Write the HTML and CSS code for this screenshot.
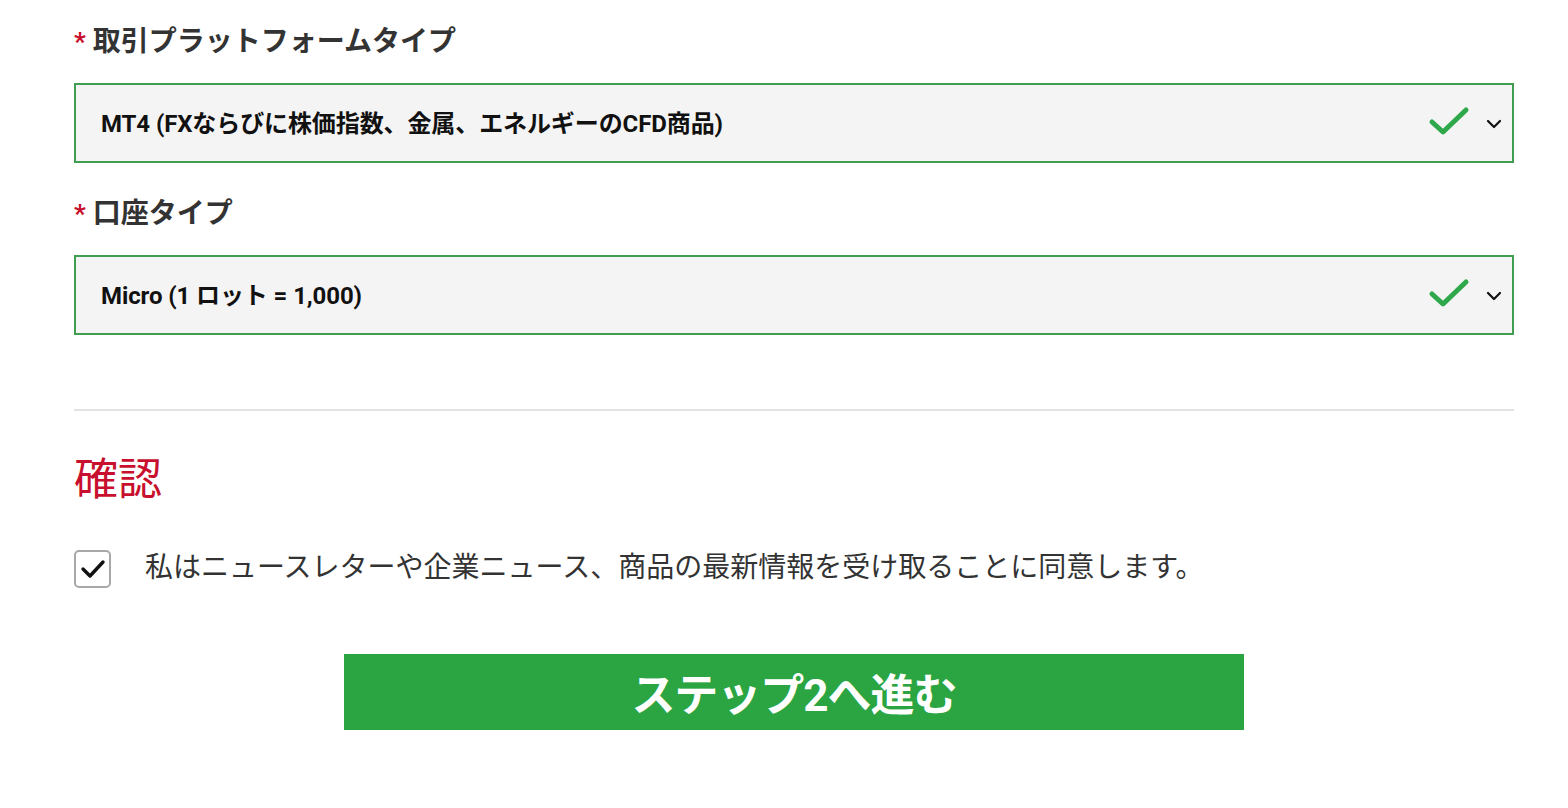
FILE: index.html
```html
<!DOCTYPE html>
<html lang="ja">
<head>
  <meta charset="UTF-8">
  <meta name="viewport" content="width=device-width, initial-scale=1.0">
  <title>口座開設 ステップ1</title>
  <link rel="stylesheet" href="styles.css">
</head>
<body>

  <div class="container">

    <!-- Platform -->
    <div class="field">
      <label class="field-label"><span class="req">*</span>取引プラットフォームタイプ</label>
      <div class="select-box">
        <span class="select-value">MT4 (FXならびに株価指数、金属、エネルギーのCFD商品)</span>
        <svg class="valid-icon" width="42" height="30" viewBox="0 0 42 30"><path d="M4 16 L15 26 L38 4" fill="none" stroke="#2ea84a" stroke-width="5" stroke-linecap="round" stroke-linejoin="round"/></svg>
        <svg class="chevron" width="16" height="10" viewBox="0 0 16 10"><path d="M2 2 L8 8 L14 2" fill="none" stroke="#111" stroke-width="2.2" stroke-linecap="round" stroke-linejoin="round"/></svg>
      </div>
    </div>

    <!-- Account type -->
    <div class="field">
      <label class="field-label"><span class="req">*</span>口座タイプ</label>
      <div class="select-box">
        <span class="select-value">Micro (1 ロット = 1,000)</span>
        <svg class="valid-icon" width="42" height="30" viewBox="0 0 42 30"><path d="M4 16 L15 26 L38 4" fill="none" stroke="#2ea84a" stroke-width="5" stroke-linecap="round" stroke-linejoin="round"/></svg>
        <svg class="chevron" width="16" height="10" viewBox="0 0 16 10"><path d="M2 2 L8 8 L14 2" fill="none" stroke="#111" stroke-width="2.2" stroke-linecap="round" stroke-linejoin="round"/></svg>
      </div>
    </div>

    <hr class="divider">

    <!-- Confirmation -->
    <h2 class="section-title">確認</h2>

    <div class="consent">
      <span class="checkbox">
        <svg width="26" height="22" viewBox="0 0 26 22"><path d="M3 11 L10 18 L23 4" fill="none" stroke="#111" stroke-width="3.4" stroke-linecap="round" stroke-linejoin="round"/></svg>
      </span>
      <span class="consent-text">私はニュースレターや企業ニュース、商品の最新情報を受け取ることに同意します。</span>
    </div>

    <div class="submit-row">
      <button class="btn-next">ステップ2へ進む</button>
    </div>

  </div>

</body>
</html>
```

FILE: styles.css
```css
body {
  margin: 0;
  padding: 0;
  background-color: #fff;
  font-family: Roboto, "Noto Sans CJK JP", sans-serif;
  color: #333;
}

.container {
  width: 1440px;
  margin-left: 74px;
  padding-top: 22px;
}

.field + .field {
  margin-top: 31px;
}

.field-label {
  display: block;
  height: 40px;
  line-height: 40px;
  font-size: 28px;
  font-weight: 700;
  color: #333;
  margin-bottom: 21px;
}

.req {
  color: #c8102e;
  font-size: 26px;
  margin-right: 7px;
  vertical-align: top;
}

/* Select */
.select-box {
  box-sizing: border-box;
  height: 80px;
  border: 2px solid #3f9e4f;
  background-color: #f4f4f4;
  display: flex;
  align-items: center;
  padding: 0 10px 0 25px;
}

.select-value {
  flex: 1;
  font-size: 24px;
  font-weight: 700;
  color: #111;
  letter-spacing: -0.1px;
  margin-top: -3px;
}

.valid-icon {
  margin-right: 16px;
  margin-top: -4px;
}

.chevron {
  margin-top: 2px;
}

.divider {
  border: none;
  height: 2px;
  background-color: #e2e2e2;
  margin: 74px 0 0;
}

.section-title {
  margin: 41px 0 0;
  height: 56px;
  line-height: 56px;
  font-size: 44px;
  font-weight: 400;
  color: #c8102e;
}

/* Consent */
.consent {
  display: flex;
  align-items: center;
  margin-top: 42px;
}

.checkbox {
  box-sizing: border-box;
  width: 37px;
  height: 38px;
  border: 2px solid #a8a8a8;
  border-radius: 5px;
  display: flex;
  align-items: center;
  justify-content: center;
  margin-right: 34px;
}

.consent-text {
  font-size: 28px;
  font-weight: 400;
  color: #333;
  margin-top: -8px;
}

/* Button */
.submit-row {
  display: flex;
  justify-content: center;
  margin-top: 66px;
}

.btn-next {
  width: 900px;
  height: 76px;
  border: none;
  background-color: #2aa542;
  color: #fff;
  font-family: Roboto, "Noto Sans CJK JP", sans-serif;
  font-size: 44px;
  font-weight: 700;
  letter-spacing: -1px;
  cursor: pointer;
}
```
